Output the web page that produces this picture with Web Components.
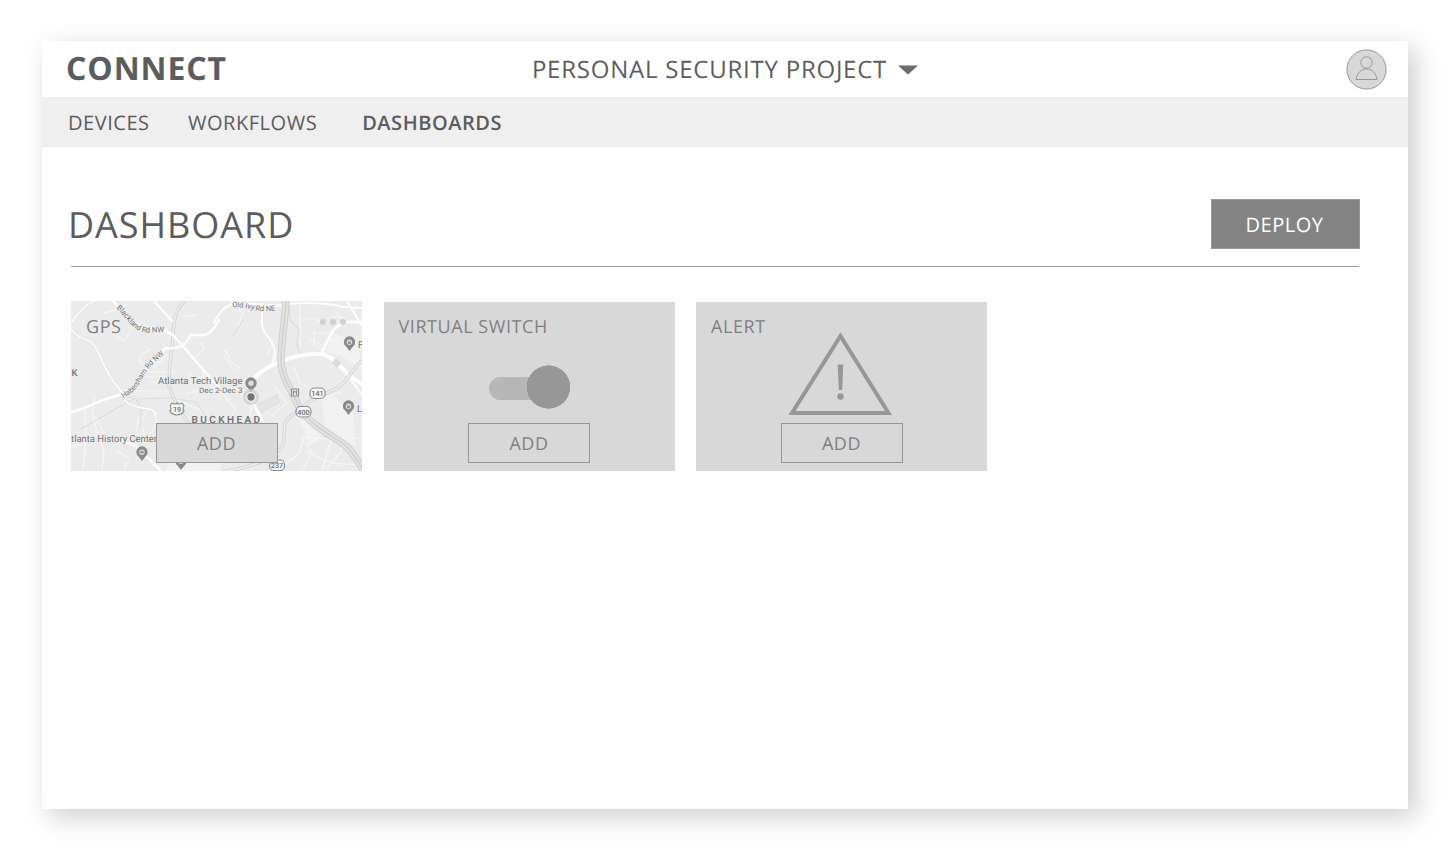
<!DOCTYPE html>
<html lang="en">
<head>
<meta charset="utf-8">
<title>Connect – Dashboard</title>
<style>
  html, body { margin: 0; height: 100%; background: #fefefe; }
  body { font-family: "Open Sans", "Noto Sans", sans-serif; color: #5c5c5c; box-sizing: border-box; padding: 41px 42px; overflow: hidden; text-rendering: geometricPrecision; }
</style>
</head>
<body>
<app-window>
  <app-header slot="header" brand="CONNECT" project="PERSONAL SECURITY PROJECT"></app-header>
  <app-nav slot="nav">
    <nav-item>DEVICES</nav-item>
    <nav-item style="margin-left:38.5px">WORKFLOWS</nav-item>
    <nav-item active style="margin-left:45px">DASHBOARDS</nav-item>
  </app-nav>
  <page-heading heading="DASHBOARD"><deploy-button slot="action">DEPLOY</deploy-button></page-heading>
  <card-grid>
    <widget-card label="GPS" map><gps-map></gps-map></widget-card>
    <widget-card label="VIRTUAL SWITCH"><switch-art></switch-art></widget-card>
    <widget-card label="ALERT"><alert-art></alert-art></widget-card>
  </card-grid>
</app-window>
<script>
const define = (name, html) => {
  customElements.define(name, class extends HTMLElement {
    connectedCallback() {
      if (this.shadowRoot) return;
      const root = this.attachShadow({ mode: 'open' });
      const t = document.createElement('template');
      t.innerHTML = html;
      root.append(t.content.cloneNode(true));
      root.querySelectorAll('[data-attr]').forEach(n => { n.textContent = this.getAttribute(n.dataset.attr); });
    }
  });
};

define('app-window', `<style>
  :host { display: flex; flex-direction: column; width: 1366px; height: 768px; background: #fefefe; box-shadow: 8px 8px 24px 0 rgba(0,0,0,.19); }
</style><slot name="header"></slot><slot name="nav"></slot><slot></slot>`);

define('app-header', `<style>
  :host { display: grid; grid-template-columns: 1fr auto 1fr; align-items: center; height: 56px; box-sizing: border-box; padding: 0 21px 0 24px; background: #fff; }
  .brand { font-weight: 700; font-size: 32px; line-height: 56px; letter-spacing: .9px; }
  .project { display: flex; align-items: center; font-size: 24px; line-height: 56px; letter-spacing: .77px; margin-right: 3px; }
  .project span { padding-top: 1px; height: 55px; line-height: 56px; }
  .project svg { margin-left: 11px; margin-top: 2px; }
  .user { justify-self: end; display: block; }
</style>
<div class="brand" data-attr="brand"></div>
<div class="project"><span data-attr="project"></span><svg width="20" height="10" viewBox="0 0 20 10"><path d="M0 .5H20L10 9.500Z" fill="#6b6b6b"/></svg></div>
<svg class="user" width="41" height="41" viewBox="0 0 41 41" fill="none" stroke="#979797">
  <circle cx="20.500" cy="20.500" r="19.600" fill="#d8d8d8"/><circle cx="20.500" cy="13.500" r="5.700"/><path d="M10 30.500C11 24 15 20 20.500 20S30 24 31 30.500Z"/></svg>`);

define('app-nav', `<style>
  :host { display: flex; align-items: center; height: 50px; background: #efefef; padding-left: 26px; box-sizing: border-box; }
</style><slot></slot>`);

define('nav-item', `<style>
  :host { display: block; font-size: 20px; line-height: 50px; letter-spacing: .53px; white-space: nowrap; padding-top: 1px; }
  :host([active]) { font-weight: 600; }
</style><slot></slot>`);

define('page-heading', `<style>
  :host { display: flex; justify-content: space-between; align-items: flex-start; margin: 52px 49px 0 29px; height: 67px; border-bottom: 1px solid #979797; }
  h1 { margin: 0 0 0 -3px; font-weight: 400; font-size: 36px; line-height: 52px; letter-spacing: .98px; }
</style><h1 data-attr="heading"></h1><slot name="action"></slot>`);

define('deploy-button', `<style>
  :host { display: block; box-sizing: border-box; width: 149px; height: 50px; margin-right: -1px; padding-right: 2px; border: 1px solid #979797; background: #838383; color: #fff; font-size: 20px; line-height: 50px; letter-spacing: .5px; text-align: center; }
</style><slot></slot>`);

define('card-grid', `<style>
  :host { display: grid; grid-template-columns: 291px 291px 291px; column-gap: 21.500px; margin: 34px 0 0 29px; align-items: end; height: 170px; }
</style><slot></slot>`);

define('widget-card', `<style>
  :host { display: grid; grid-template-rows: 100%; grid-template-columns: 100%; height: 169px; background: #d8d8d8; color: #808080; overflow: hidden; }
  :host([map]) { height: 170px; background: #ebebeb; }
  :host([map]) .body { padding-top: 14px; }
  .art, .body { grid-area: 1 / 1; min-width: 0; }
  .body { z-index: 1; display: flex; flex-direction: column; justify-content: space-between; align-items: center; padding: 13px 0 8px; }
  .label { align-self: flex-start; margin-left: 15px; font-size: 18px; line-height: 25px; letter-spacing: .56px; }
  button { font: inherit; font-size: 18px; letter-spacing: .54px; text-rendering: inherit; color: #808080; width: 122px; height: 40px; padding: 2px 0 0; border: 1px solid #979797; background: #d8d8d8; }
</style>
<div class="art"><slot></slot></div>
<div class="body"><div class="label" data-attr="label"></div><button>ADD</button></div>`);

define('switch-art', `<style>:host, svg { display: block; } circle { filter: drop-shadow(0 0 .6px rgba(0,0,0,.35)); }</style>
<svg width="291" height="169"><rect x="105" y="75" width="60" height="23" rx="11.500" fill="#b7b7b7"/><circle cx="164.500" cy="85" r="21.500" fill="#979797"/></svg>`);

define('alert-art', `<style>:host, svg { display: block; }</style>
<svg width="291" height="169"><path d="M144.500 34L192.500 111H96Z" fill="none" stroke="#979797" stroke-width="4"/><path d="M141.700 62.500H147.200L146.200 88H142.900Z" fill="#979797"/><circle cx="144.500" cy="94.500" r="3.200" fill="#979797"/></svg>`);

define('gps-map', `<style>
  :host, svg { display: block; }
  text { font-family: Roboto, sans-serif; fill: #707070; stroke: #f0f0f0; stroke-width: 1px; paint-order: stroke; stroke-linejoin: round; }
</style>
<svg width="291" height="170" viewBox="0 0 291 170" fill="none" stroke-linejoin="round" stroke-linecap="round">
  <defs>
    <path id="blk" d="M45 7C55 16 58 24 67 29S82 30 110 31"/>
    <path id="hab" d="M52 97C64 91 67 85 71 78S79 63 98 50"/>
    <path id="ivy" d="M161 6Q174 6 183 9T220 8"/>
    <g id="pin"><path d="M0 8L-3.500 3.500A5.700 5.700 0 1 1 3.500 3.500Z" fill="#8a8a8a"/><circle r="2.700" cy="-.8" fill="#ddd"/></g>
  </defs>
  <rect width="291" height="170" fill="#ebebeb"/>
  <path d="M263 33L286 40 291 68 270 55 255 51ZM230 121L240 112 252 126 248 140 238 145ZM250 98L263 95 282 112 285 145 270 139 255 125ZM95 156H150V170H96Z" fill="#f2f2f2"/>
  <path d="M187 103L206 94 209 101 191 111Z" fill="#e4e4e4" stroke="#dedede"/>
  <!-- minor lanes -->
  <g stroke="#f6f6f6" stroke-width="1.200">
    <path d="M32 12Q45 10 58 2M45 34L53 40 62 26M70 54Q66 63 75 64L90 60M80 48L70 54M78 71H104M75 76H98M78 81H100M50 90H100M82 67L96 54M118 71L124 80 133 75 131 68M123 57L133 48 130 42M112 16L125 14"/>
    <path d="M160 0L172 12 167 25M152 49Q160 53 158 60L170 68M152 54L163 69M228 18H243L256 22M229 4V55M240 32H262M239 38L250 44 262 38M243 28V45L253 49M261 16H274V25M265 11L270 17M223 67L229 82 235 85M195 55L203 40"/>
    <path d="M24 97L21 113 28 137 33 150 31 170M14 107L15 140 12 168M24 115L34 135M46 150L58 157 53 170M68 115L65 130 72 140M78 106L70 119 74 137M85 111V123L74 142M108 100L130 109M115 93L130 88M0 147L15 142"/>
    <path d="M150 91L164 107 160 120M164 86L181 104 178 119M204 86L216 102 200 115M233 136L256 138 291 137M233 137L228 153 210 166M235 150L260 162 291 164M231 138L241 151 231 170M260 139L251 169M253 97L270 91M271 139L270 151 255 168M221 111L232 122"/>
  </g>
  <g stroke="#dcdcdc" stroke-width="1.200"><path d="M10 128L62 98 100 97 125 101 136 117M54 95L65 98 70 106V125M218 0L219 19 228 29 226 43 230 55M172 19L162 35"/></g>
  <!-- rail line -->
  <path d="M114 0C105 8 103 17 102 33C100 58 98 66 98 85Q103 102 119 125" stroke="#d5d5d5" stroke-width="3.400"/>
  <path d="M114 0C105 8 103 17 102 33C100 58 98 66 98 85Q103 102 119 125" stroke="#ececec" stroke-width="1.600"/>
  <path d="M0 22Q13 3 24 0M0 28C8 40 17 36 23 44S35 74 46 85 48 102 67 106 81 106 85 116" stroke="#dfdfdf" stroke-width="2.600"/>
  <!-- white streets -->
  <g stroke="#fdfdfd" stroke-width="2">
    <path d="M0 22Q13 3 24 0M0 28C8 40 17 36 23 44S35 74 46 85 48 102 67 106 81 106 85 116" stroke-width="1.800"/>
    <path d="M83 0L101 20M191 3V24C193 35 203 39 204 51Q204 58 200 64M276 0L291 25M216 3Q250 0 272 6L291 7M143 22Q151 4 166 2L214 5M278 76L291 94M181 100L190 119M182 102L192 119"/>
    <path d="M42 0C54 15 58 19 67 24S88 23 103 35L148 87" stroke-width="2.600"/>
    <path d="M0 111Q7 110 20 104T48 94Q65 88 70 77T95 47Q107 48 112 44T120 34H134Q142 31 148 19" stroke-width="2.600"/>
    <path d="M251 52Q255 42 260 33T275 21H291" stroke-width="2.800"/>
    <path d="M182 78C189 71 195 67 204 63S228 53 243 53Q258 52 267 63T291 83" stroke-width="4"/>
    <path d="M54 141L66 146 90 170" stroke-width="2.600"/>
  </g>
  <path d="M261 62L265 57 270 62 266 67Z" fill="#d9d9d9"/>
  <path d="M291 60C280 68 277 84 258 91S234 105 220 115 221 140 205 152 165 169 154 170" stroke="#d5d5d5" stroke-width="3.500"/>
  <path d="M291 60C280 68 277 84 258 91S234 105 220 115 221 140 205 152 165 169 154 170" stroke="#ededed" stroke-width="1.500"/>
  <!-- highway -->
  <g>
    <path d="M215 0C214 21 210 39 210 61C211 77 219 85 225 100S247 127 262 136 280 149 291 167" stroke="#d0d0d0" stroke-width="7.500"/>
    <path d="M215 0C214 21 210 39 210 61C211 77 219 85 225 100S247 127 262 136 280 149 291 167" stroke="#e4e4e4" stroke-width="5.300"/>
    <path d="M215 0C214 21 210 39 210 61C211 77 219 85 225 100S247 127 262 136 280 149 291 167" stroke="#d2d2d2" stroke-width="1.800"/>
  </g>
  <!-- labels -->
  <g font-size="7.600">
    <text><textPath href="#blk">Blackland Rd NW</textPath></text>
    <text font-size="7.200"><textPath href="#hab">Habersham Rd NW</textPath></text>
    <text font-size="7.400"><textPath href="#ivy">Old Ivy Rd NE</textPath></text>
  </g>
  <text x="87" y="83" font-size="9.500" textLength="84.500" lengthAdjust="spacingAndGlyphs">Atlanta Tech Village</text>
  <text x="128" y="92" font-size="7.500" textLength="43.500" lengthAdjust="spacingAndGlyphs">Dec 2-Dec 3</text>
  <text x="120.500" y="122" font-size="10" font-weight="600" textLength="68.500">BUCKHEAD</text>
  <text x="-6" y="141" font-size="9.700" textLength="92" lengthAdjust="spacingAndGlyphs">Atlanta History Center</text>
  <text x="0.500" y="75" font-size="9.500" font-weight="500">K</text>
  <text x="287" y="46.500" font-size="9.500">F</text>
  <text x="286" y="111" font-size="9.500">L</text>
  <!-- route shields -->
  <g fill="#f6f6f6" stroke="#8e8e8e" stroke-width="1.200">
    <path d="M101 102Q104 104 106 102 108 104 111 102L113 105Q111 108 113 110 112 113 106 114 99 113 99 110 101 108 99 105Z"/>
    <rect x="239" y="87" width="15" height="10.500" rx="4.500"/><rect x="225" y="105.500" width="15" height="10.500" rx="4.500"/><rect x="198.500" y="159" width="15" height="10.500" rx="4.500"/>
    <rect x="220.500" y="88" width="7" height="7" fill="#e8e8e8"/>
  </g>
  <path d="M222.500 93.500V89.500L224 91.500 225.500 89.500V93.500" stroke="#8c8c8c" stroke-width="1"/>
  <g font-size="7.200" text-anchor="middle" font-weight="500"><text x="106" y="111">19</text><text x="246.500" y="95">141</text><text x="232.500" y="113.500">400</text><text x="206" y="167">237</text></g>
  <use href="#pin" x="180" y="83"/><circle cx="180" cy="96" r="8" fill="#c9c9c9" opacity=".65"/><circle cx="180" cy="96" r="5" fill="#f3f3f3"/><circle cx="180" cy="96" r="3.700" fill="#767676"/>
  <use href="#pin" x="278.500" y="42"/><use href="#pin" x="277.500" y="106"/><use href="#pin" x="71" y="152"/><use href="#pin" x="110" y="161"/>
  <g fill="#949494"><rect x="277" y="40.500" width="3" height="2.500"/><rect x="276" y="104.500" width="3" height="2.500"/><rect x="69.300" y="150" width="3.400" height="2.400"/></g>
  <g fill="#d0d0d0"><circle cx="252" cy="21" r="3"/><circle cx="262" cy="21" r="3"/><circle cx="272" cy="21" r="3"/></g>
</svg>`);
</script>
</body>
</html>
